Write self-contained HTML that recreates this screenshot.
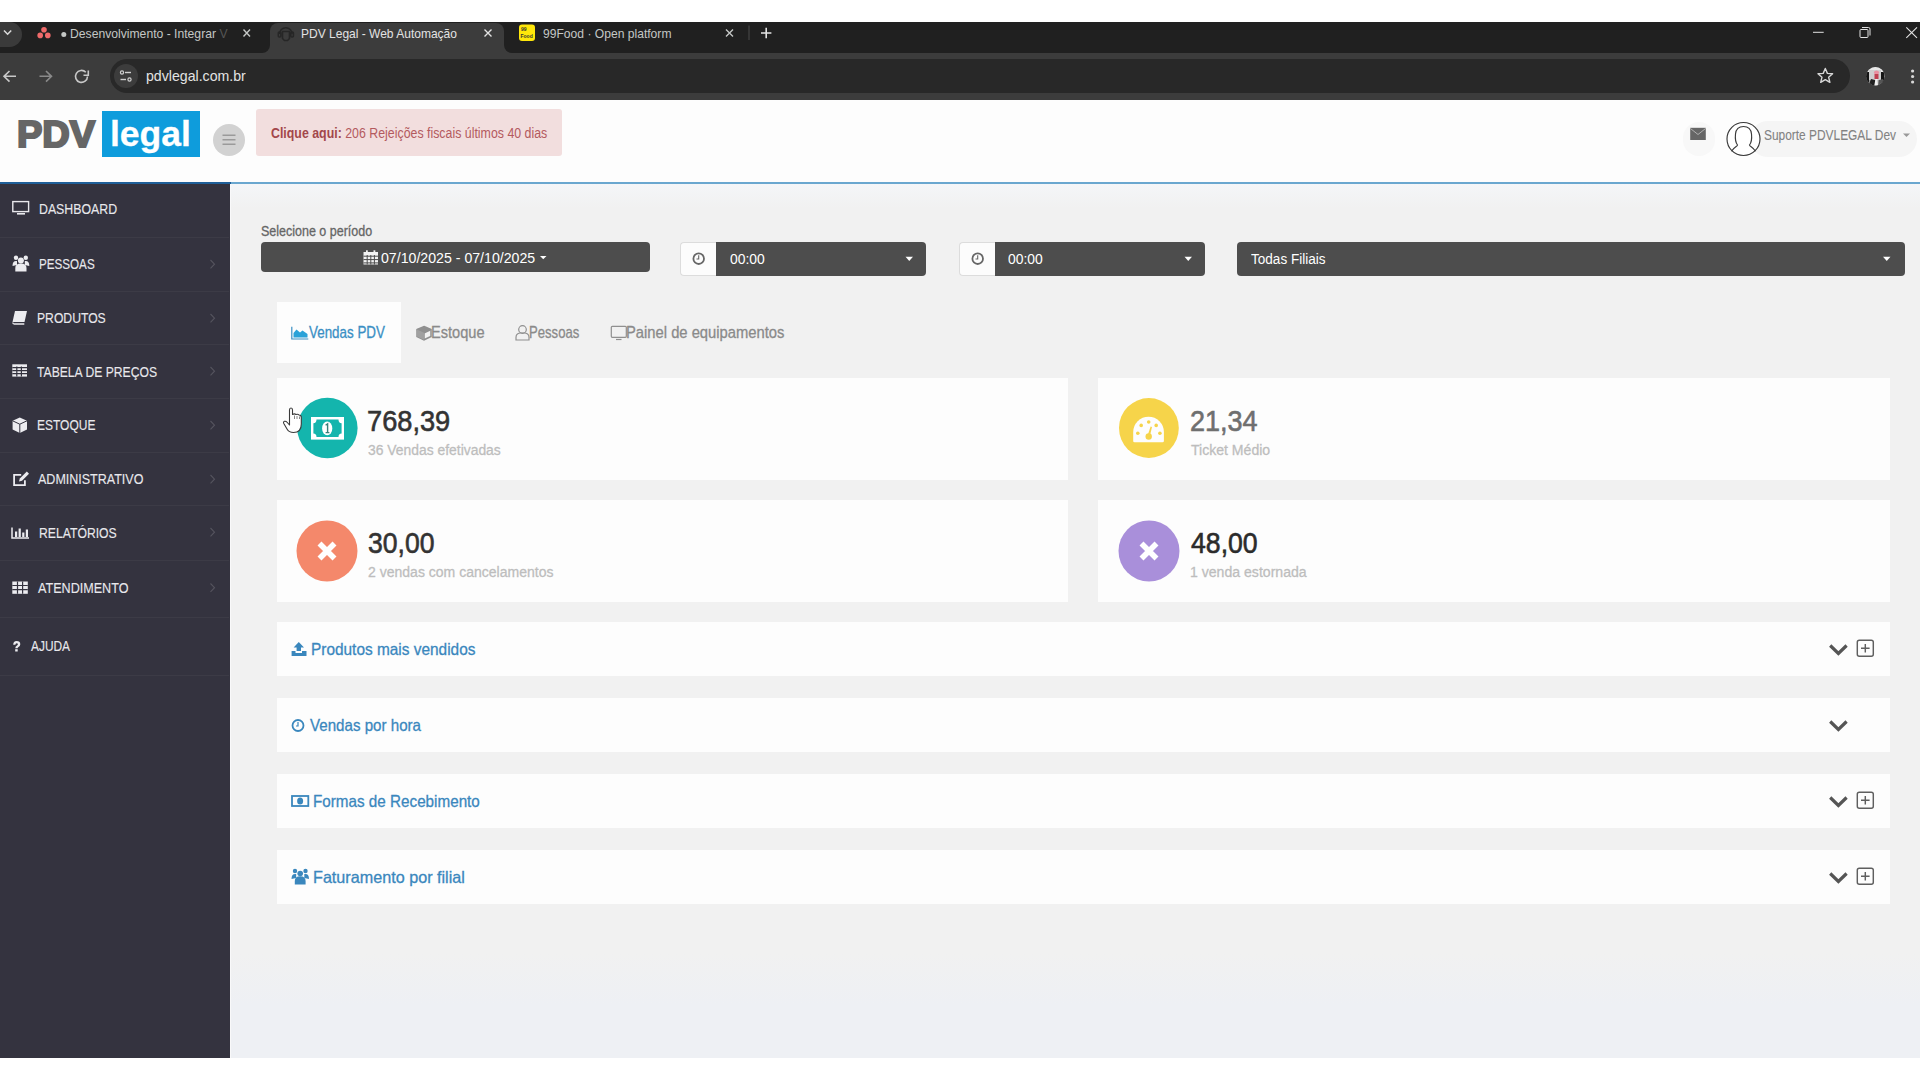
<!DOCTYPE html>
<html><head><meta charset="utf-8"><title>PDV Legal</title>
<style>
html,body{margin:0;padding:0;width:1920px;height:1080px;overflow:hidden;background:#fff;font-family:"Liberation Sans",sans-serif;}
.a{position:absolute;}
.t{position:absolute;white-space:nowrap;line-height:1;transform-origin:0 0;font-family:"Liberation Sans",sans-serif;}
svg{position:absolute;overflow:visible;}
</style></head><body>
<!-- ============ BROWSER CHROME ============ -->
<div class="a" style="left:0;top:22px;width:1920px;height:31px;background:#202020"></div>
<div class="a" style="left:0;top:22px;width:22px;height:25px;background:#3a3a3a;border-radius:0 13px 13px 0"></div>
<svg style="left:0;top:0" width="30" height="60"><path d="M4 30.5 L7.6 34.2 L11.2 30.5" fill="none" stroke="#d8d8d8" stroke-width="1.6"/></svg>
<!-- active tab -->
<div class="a" style="left:262px;top:45px;width:250px;height:8px;background:#3c3c3c"></div>
<div class="a" style="left:254px;top:37px;width:16px;height:16px;background:#202020;border-radius:0 0 8px 0"></div>
<div class="a" style="left:504px;top:37px;width:16px;height:16px;background:#202020;border-radius:0 0 0 8px"></div>
<div class="a" style="left:270px;top:23px;width:234px;height:30px;background:#3c3c3c;border-radius:8px 8px 0 0"></div>
<!-- toolbar -->
<div class="a" style="left:0;top:53px;width:1920px;height:47px;background:#3c3c3c"></div>
<div class="a" style="left:110px;top:59px;width:1740px;height:34px;background:#282828;border-radius:17px"></div>
<div class="a" style="left:114px;top:64px;width:24px;height:24px;background:#3c3c3c;border-radius:12px"></div>
<!-- tab icons -->
<svg style="left:0;top:0" width="800" height="60">
  <!-- asana -->
  <circle cx="44" cy="29.8" r="2.8" fill="#f06a6a"/>
  <circle cx="40.2" cy="35.4" r="2.8" fill="#f06a6a"/>
  <circle cx="47.8" cy="35.4" r="2.8" fill="#f06a6a"/>
  <circle cx="63.8" cy="34.5" r="2.5" fill="#c4c7c5"/>
  <!-- close x tab1 -->
  <path d="M243.5 29.5 L250 36.5 M250 29.5 L243.5 36.5" stroke="#c4c7c5" stroke-width="1.4"/>
  <!-- tab2 icon headset person -->
  <g fill="none" stroke="#262626" stroke-width="1.6">
    <path d="M279.5 34 a6.3 6.3 0 0 1 12.6 0"/>
    <rect x="278.3" y="32" width="2.6" height="5" rx="1"/>
    <rect x="290.8" y="32" width="2.6" height="5" rx="1"/>
    <path d="M282.5 31.5 h7 v7 l-2 2 h-3 l-2 -2 z"/>
  </g>
  <path d="M484.5 29.5 L491.5 36.5 M491.5 29.5 L484.5 36.5" stroke="#e3e3e3" stroke-width="1.4"/>
  <!-- 99food -->
  <rect x="519" y="24.5" width="16" height="16.5" rx="3" fill="#ffe70a"/>
  <text x="521" y="31" font-family="Liberation Sans" font-size="5" font-weight="700" fill="#333">99</text>
  <text x="520.5" y="37.5" font-family="Liberation Sans" font-size="5" font-weight="700" fill="#333">Food</text>
  <path d="M726 29.5 L733 36.5 M733 29.5 L726 36.5" stroke="#c4c7c5" stroke-width="1.4"/>
  <path d="M749 25.5 V40" stroke="#4a4a4a" stroke-width="1"/>
  <path d="M766.2 27.8 V38.2 M761 33 H771.4" stroke="#e3e3e3" stroke-width="1.6"/>
</svg>
<!-- window controls -->
<svg style="left:1780px;top:0" width="140" height="60">
  <path d="M33 32.3 H43.7" stroke="#e3e3e3" stroke-width="1"/>
  <rect x="80" y="29.5" width="8" height="8" rx="1" fill="none" stroke="#e3e3e3" stroke-width="1"/>
  <path d="M82 27.5 h6.5 a1.5 1.5 0 0 1 1.5 1.5 v6.5" fill="none" stroke="#e3e3e3" stroke-width="1"/>
  <path d="M126.3 27.4 L137 37.8 M137 27.4 L126.3 37.8" stroke="#e3e3e3" stroke-width="1.1"/>
</svg>
<!-- nav icons -->
<svg style="left:0;top:0" width="300" height="100">
  <path d="M16 76.3 H4.5 M9.5 71 L4 76.3 L9.5 81.6" fill="none" stroke="#c8c8c8" stroke-width="1.6"/>
  <path d="M39.5 76.3 H51 M46 71 L51.5 76.3 L46 81.6" fill="none" stroke="#8a8a8a" stroke-width="1.6"/>
  <path d="M87.5 76.5 A6 6 0 1 1 85.8 72.2" fill="none" stroke="#c8c8c8" stroke-width="1.6"/>
  <path d="M83.5 71.2 H88.3 V66.4" fill="none" stroke="#c8c8c8" stroke-width="1.6" transform="translate(0,4)"/>
  <!-- site info -->
  <circle cx="122" cy="72.5" r="1.6" fill="none" stroke="#d0d0d0" stroke-width="1.2"/>
  <path d="M125 72.5 H131" stroke="#d0d0d0" stroke-width="1.4"/>
  <path d="M120.5 79.5 H126" stroke="#d0d0d0" stroke-width="1.4"/>
  <circle cx="129.5" cy="79.5" r="1.6" fill="none" stroke="#d0d0d0" stroke-width="1.2"/>
</svg>
<svg style="left:1780px;top:50px" width="140" height="50">
  <path d="M45.3 18.5 L47.4 23.4 L52.6 23.8 L48.6 27.2 L49.9 32.3 L45.3 29.6 L40.7 32.3 L42 27.2 L38 23.8 L43.2 23.4 Z" fill="none" stroke="#d8d8d8" stroke-width="1.4" stroke-linejoin="round"/>
  <clipPath id="avc"><circle cx="95.4" cy="26.3" r="9.2"/></clipPath>
  <g clip-path="url(#avc)">
    <rect x="85" y="16" width="21" height="21" fill="#9a9a9a"/>
    <rect x="87" y="16" width="17" height="8" fill="#e8e8e8"/>
    <rect x="86" y="22" width="3" height="10" fill="#151515"/>
    <rect x="101" y="22" width="3" height="10" fill="#151515"/>
    <rect x="89" y="20" width="12" height="10" fill="#cfcfcf"/>
    <ellipse cx="96.5" cy="22.5" rx="2.6" ry="2" fill="#e890a0"/>
    <rect x="94.5" y="24" width="4" height="5" fill="#c04050"/>
    <path d="M88 37 l3 -8 l4 1 l1 7 z" fill="#202020"/>
    <path d="M94 37 l1.5 -8 l2 0 l0.5 8 z" fill="#f0f0f0"/>
    <path d="M98 37 l1 -7 l4 -1 l3 8 z" fill="#555"/>
  </g>
  <circle cx="132.6" cy="21" r="1.6" fill="#d8d8d8"/>
  <circle cx="132.6" cy="26.5" r="1.6" fill="#d8d8d8"/>
  <circle cx="132.6" cy="32" r="1.6" fill="#d8d8d8"/>
</svg>

<!-- ============ PAGE HEADER ============ -->
<div class="a" style="left:0;top:100px;width:1920px;height:82px;background:#fdfdfd"></div>
<div class="a" style="left:102px;top:111px;width:98px;height:46px;background:#0e9cdc"></div>
<div class="a" style="left:213px;top:124px;width:32px;height:32px;background:#d2d2d2;border-radius:16px"></div>
<svg style="left:0;top:0" width="260" height="180">
  <path d="M222.5 135.3 H235.5 M222.5 139.8 H235.5 M222.5 144.3 H235.5" stroke="#9a9a9a" stroke-width="1.6"/>
</svg>
<div class="a" style="left:256px;top:109px;width:306px;height:47px;background:#f2dede;border-radius:3px"></div>
<!-- right header -->
<div class="a" style="left:1683px;top:122px;width:32px;height:34px;background:#f8f8f8;border-radius:16px"></div>
<div class="a" style="left:1750px;top:121px;width:167px;height:36px;background:#f5f5f5;border-radius:18px"></div>
<svg style="left:1680px;top:110px" width="240" height="60">
  <path d="M10.2 17.8 H25.8 V30 H10.2 Z" fill="#666"/>
  <path d="M10.2 18.3 L18 24.5 L25.8 18.3" fill="none" stroke="#b0b0b0" stroke-width="1"/>
  <circle cx="63.5" cy="29" r="16.5" fill="#fff" stroke="#3a3a3a" stroke-width="1.15"/>
  <path d="M51.5 41.2 C54 37 57.5 36.5 57.5 35 C55.5 32.5 55 29 55.5 24 C56 19 59 16.5 63.5 16.5 C68 16.5 71 19 71.5 24 C72 29 71.5 32.5 69.5 35 C69.5 36.5 73 37 75.5 41.2" fill="none" stroke="#3a3a3a" stroke-width="1.15"/>
  <path d="M223 23.5 h7 l-3.5 3.5 z" fill="#999"/>
</svg>
<!-- blue line -->
<div class="a" style="left:0;top:182px;width:1920px;height:2px;background:#6aa7cf"></div>
<div class="a" style="left:0;top:182px;width:231px;height:2px;background:#1f5f98"></div>
<div class="a" style="left:230px;top:184px;width:1px;height:874px;background:#f9f9fa"></div>

<!-- ============ SIDEBAR ============ -->
<div class="a" style="left:0;top:184px;width:230px;height:874px;background:#34333f"></div>
<div class="a" style="left:0;top:237px;width:229px;height:1px;background:#3c3b46"></div>
<div class="a" style="left:0;top:291px;width:229px;height:1px;background:#3c3b46"></div>
<div class="a" style="left:0;top:344px;width:229px;height:1px;background:#3c3b46"></div>
<div class="a" style="left:0;top:398px;width:229px;height:1px;background:#3c3b46"></div>
<div class="a" style="left:0;top:452px;width:229px;height:1px;background:#3c3b46"></div>
<div class="a" style="left:0;top:505px;width:229px;height:1px;background:#3c3b46"></div>
<div class="a" style="left:0;top:560px;width:229px;height:1px;background:#3c3b46"></div>
<div class="a" style="left:0;top:617px;width:229px;height:1px;background:#3c3b46"></div>
<div class="a" style="left:0;top:675px;width:229px;height:1px;background:#3c3b46"></div>
<svg style="left:0;top:0" width="231" height="700">
  <g fill="none" stroke="#55545e" stroke-width="1.1">
    <path d="M210.5 260 L214.5 264.2 L210.5 268.4"/>
    <path d="M210.5 314 L214.5 318.2 L210.5 322.4"/>
    <path d="M210.5 367 L214.5 371.2 L210.5 375.4"/>
    <path d="M210.5 421 L214.5 425.2 L210.5 429.4"/>
    <path d="M210.5 475 L214.5 479.2 L210.5 483.4"/>
    <path d="M210.5 528 L214.5 532.2 L210.5 536.4"/>
    <path d="M210.5 583.5 L214.5 587.7 L210.5 591.9"/>
  </g>
  <!-- dashboard monitor -->
  <rect x="12.8" y="201.6" width="15.8" height="10" fill="none" stroke="#e8e8ec" stroke-width="1.4"/>
  <rect x="17" y="213" width="8" height="1.6" fill="#e8e8ec"/>
  <!-- pessoas group -->
  <g fill="#ececf0">
    <circle cx="16" cy="257.8" r="2.2"/><circle cx="25.8" cy="257.8" r="2.2"/>
    <circle cx="20.9" cy="260.5" r="3"/>
    <path d="M12.5 266 q0 -5 3.5 -5 h1 v4 z"/><path d="M29.3 266 q0 -5 -3.5 -5 h-1 v4 z"/>
    <path d="M15.3 271.5 v-3.5 q0 -4.5 5.6 -4.5 q5.6 0 5.6 4.5 v3.5 z"/>
  </g>
  <!-- produtos book -->
  <path d="M15 311 h12 l-2.5 11 h-12 z" fill="#ececf0"/>
  <path d="M12.8 322.5 q0 1.5 1.5 1.5 h10" fill="none" stroke="#ececf0" stroke-width="1.3"/>
  <!-- tabela grid -->
  <g fill="#ececf0">
    <rect x="12.3" y="364.3" width="14.7" height="12.3"/>
  </g>
  <g stroke="#34333f" stroke-width="1.2">
    <path d="M12.3 367.6 H27 M12.3 370.6 H27 M12.3 373.6 H27 M16.8 366.5 V376.6 M21.4 366.5 V376.6"/>
  </g>
  <!-- estoque cube -->
  <path d="M19.8 417.5 L27 420.8 V429.5 L19.8 433 L12.6 429.5 V420.8 Z" fill="#ececf0"/>
  <path d="M12.6 420.8 L19.8 424.2 L27 420.8 M19.8 424.2 V433" fill="none" stroke="#34333f" stroke-width="1"/>
  <!-- administrativo edit -->
  <path d="M13.2 474 h8 v1.8 h-6.2 v8.5 h9 v-4 h1.8 v5.8 h-12.6 z" fill="#ececf0"/>
  <path d="M19 481.5 l0.8 -3 l7 -7 l2.2 2.2 l-7 7 z" fill="#ececf0"/>
  <!-- relatorios chart -->
  <path d="M12 527.5 V538 H29" fill="none" stroke="#ececf0" stroke-width="1.5"/>
  <rect x="15" y="531.5" width="2.2" height="5.5" fill="#ececf0"/>
  <rect x="18.6" y="528.5" width="2.2" height="8.5" fill="#ececf0"/>
  <rect x="22.2" y="532.5" width="2.2" height="4.5" fill="#ececf0"/>
  <rect x="25.8" y="529.5" width="2.2" height="7.5" fill="#ececf0"/>
  <!-- atendimento grid -->
  <rect x="12.3" y="581.5" width="15.5" height="12.3" fill="#ececf0"/>
  <path d="M12.3 585.5 H27.8 M12.3 589.6 H27.8 M17.5 581.5 V593.8 M22.6 581.5 V593.8" stroke="#34333f" stroke-width="1.2"/>
  <!-- ajuda ? -->
  <path d="M13.2 644.8 Q13.2 641 16.6 641 Q20.3 641 20.3 644.3 Q20.3 646.3 18.2 647.3 Q17.6 647.7 17.6 648.3 H15.3 Q15.3 646.5 16.7 645.8 Q17.9 645.1 17.9 644.3 Q17.9 643.2 16.6 643.2 Q15.4 643.2 15.4 644.8 Z" fill="#ececf0"/><rect x="15.2" y="649.2" width="2.5" height="2.3" fill="#ececf0"/>
</svg>

<!-- ============ CONTENT ============ -->
<div class="a" style="left:231px;top:184px;width:1689px;height:874px;background:linear-gradient(#f4f6f8 0px,#f1f1f1 24px,#f1f1f1 770px,#eef0f4 820px,#eef0f4 874px)"></div>
<!-- date button -->
<div class="a" style="left:261px;top:242px;width:389px;height:30px;background:#4d4d4d;border-radius:4px"></div>
<div class="a" style="left:680px;top:242px;width:35px;height:32px;background:#fcfcfc;border:1px solid #dcdcdc;border-right:0;border-radius:4px 0 0 4px"></div>
<div class="a" style="left:716px;top:242px;width:210px;height:34px;background:#4d4d4d;border-radius:0 4px 4px 0"></div>
<div class="a" style="left:959px;top:242px;width:35px;height:32px;background:#fcfcfc;border:1px solid #dcdcdc;border-right:0;border-radius:4px 0 0 4px"></div>
<div class="a" style="left:995px;top:242px;width:210px;height:34px;background:#4d4d4d;border-radius:0 4px 4px 0"></div>
<div class="a" style="left:1237px;top:242px;width:668px;height:34px;background:#4d4d4d;border-radius:4px"></div>

<svg style="left:0;top:0" width="1920" height="300">
  <!-- calendar -->
  <rect x="363.5" y="252" width="14.5" height="12.5" fill="#f2f2f2"/>
  <rect x="366" y="250.3" width="1.8" height="3" fill="#f2f2f2"/><rect x="373.5" y="250.3" width="1.8" height="3" fill="#f2f2f2"/>
  <path d="M363.5 256.2 H378 M363.5 259.6 H378 M363.5 262.9 H378 M367.2 255 V264.5 M370.8 255 V264.5 M374.4 255 V264.5" stroke="#4d4d4d" stroke-width="1"/>
  <path d="M540 256 h6.5 l-3.25 3.3 z" fill="#fff"/>
  <!-- time addons -->
  <circle cx="698.7" cy="258.7" r="5.3" fill="none" stroke="#666" stroke-width="1.8"/>
  <path d="M698.7 255.3 V259 H696.5" fill="none" stroke="#666" stroke-width="1.1"/>
  <circle cx="977.7" cy="258.7" r="5.3" fill="none" stroke="#666" stroke-width="1.8"/>
  <path d="M977.7 255.3 V259 H975.5" fill="none" stroke="#666" stroke-width="1.1"/>
  <path d="M905.5 256.7 h7.5 l-3.75 4.3 z" fill="#fff"/>
  <path d="M1184.5 256.7 h7.5 l-3.75 4.3 z" fill="#fff"/>
  <path d="M1883 256.7 h7.5 l-3.75 4.3 z" fill="#fff"/>
</svg>
<!-- tabs -->
<div class="a" style="left:277px;top:302px;width:124px;height:61px;background:#fdfdfd"></div>

<!-- cards -->
<div class="a" style="left:277px;top:378px;width:791px;height:102px;background:#fdfdfd"></div>
<div class="a" style="left:1098px;top:378px;width:792px;height:102px;background:#fdfdfd"></div>
<div class="a" style="left:277px;top:500px;width:791px;height:102px;background:#fdfdfd"></div>
<div class="a" style="left:1098px;top:500px;width:792px;height:102px;background:#fdfdfd"></div>
<!-- panels -->
<div class="a" style="left:277px;top:622px;width:1613px;height:54px;background:#fdfdfd"></div>
<div class="a" style="left:277px;top:698px;width:1613px;height:54px;background:#fdfdfd"></div>
<div class="a" style="left:277px;top:774px;width:1613px;height:54px;background:#fdfdfd"></div>
<div class="a" style="left:277px;top:850px;width:1613px;height:54px;background:#fdfdfd"></div>

<svg style="left:0;top:0" width="1920" height="1000">
  <!-- tab icons -->
  <g>
    <path d="M291.8 326.8 V339 H308.3" fill="none" stroke="#3a8fc4" stroke-width="1.2"/>
    <path d="M293.5 337.5 V333 L296.5 329.5 L300 332.5 L302.5 330.5 L307.5 334 V337.5 Z" fill="#2aa2d8"/>
  </g>
  <g fill="none" stroke="#909090" stroke-width="1.5">
    <path d="M424 326.5 L431 329.5 V336.5 L424 339.8 L417 336.5 V329.5 Z"/>
    <path d="M417 329.5 L424 332.8 L431 329.5 M424 332.8 V339.8"/>
  </g>
  <path d="M424 326.5 L431 329.5 L424 332.8 L417 329.5 Z" fill="#909090"/>
  <path d="M417 329.5 L424 332.8 V339.8 L417 336.5 Z" fill="#a0a0a0"/>
  <g fill="none" stroke="#909090" stroke-width="1.2">
    <circle cx="522.5" cy="329.5" r="3.8"/>
    <path d="M516 340 v-2.5 q0 -4 4 -4.5 h5 q4 0.5 4 4.5 v2.5 z"/>
    <rect x="611.3" y="326.3" width="15" height="11" rx="1"/>
    <path d="M616 339.5 h5.5"/>
  </g>
  <!-- card circles -->
  <circle cx="327.4" cy="428" r="30.2" fill="#14b5ad"/>
  <rect x="311" y="417" width="33" height="22.6" fill="#fff"/>
  <path d="M316.5 419.6 H338.5 Q338.5 423.2 341.6 423.2 V433.4 Q338.5 433.4 338.5 437 H316.5 Q316.5 433.4 313.4 433.4 V423.2 Q316.5 423.2 316.5 419.6 Z" fill="#14b5ad"/>
  <ellipse cx="327.2" cy="428.4" rx="5.1" ry="6.9" fill="#fff"/>
  <path d="M325.6 425.2 L327.6 423.8 V432.6 M325.6 432.6 H329.4" fill="none" stroke="#3a7f7a" stroke-width="1.4"/>
  <circle cx="1148.9" cy="428" r="29.9" fill="#f6d44a"/>
  <path d="M1133.2 432 A15.35 15.35 0 0 1 1163.9 432 V441 Q1163.9 442.3 1162.6 442.3 H1134.5 Q1133.2 442.3 1133.2 441 Z" fill="#fdfdfd"/>
  <g fill="#f6d44a">
    <circle cx="1137.8" cy="433.2" r="1.8"/><circle cx="1141.2" cy="425.4" r="1.8"/><circle cx="1148.7" cy="422" r="1.8"/>
    <circle cx="1156.2" cy="425.4" r="1.8"/><circle cx="1159.9" cy="433.2" r="1.8"/>
    <circle cx="1148.7" cy="436.5" r="3.2"/>
    <path d="M1147.6 435.5 L1150.6 426.6 L1152 427 L1149.8 436.2 Z"/>
  </g>
  <circle cx="327" cy="551" r="30.5" fill="#f4886b"/>
  <path d="M319.5 543.5 L334.5 558.5 M334.5 543.5 L319.5 558.5" stroke="#fff" stroke-width="5.6"/>
  <circle cx="1149" cy="551" r="30.5" fill="#a98fda"/>
  <path d="M1141.5 543.5 L1156.5 558.5 M1156.5 543.5 L1141.5 558.5" stroke="#fff" stroke-width="5.6"/>

  <!-- panel icons -->
  <g fill="#3a87bd">
    <path d="M298.8 642 L304 647.5 H301 V651 H296.6 V647.5 H293.6 Z"/>
    <path d="M291.6 651 H295.5 V653 H302 V651 H306.5 V656 H291.6 Z"/>
  </g>
  <circle cx="298" cy="725.5" r="5.5" fill="none" stroke="#3a87bd" stroke-width="1.8"/>
  <path d="M298 722 V726 H296" fill="none" stroke="#3a87bd" stroke-width="1.2"/>
  <rect x="292" y="796" width="16.3" height="10" fill="none" stroke="#3a87bd" stroke-width="1.8"/>
  <ellipse cx="300.1" cy="801" rx="3" ry="3.6" fill="#3a87bd"/>
  <g fill="#3a87bd">
    <circle cx="295" cy="871" r="2.2"/><circle cx="305.5" cy="871" r="2.2"/><circle cx="300.2" cy="873.5" r="2.8"/>
    <path d="M291.5 879 q0 -5 3.5 -5 h1.2 v4 z"/><path d="M309 879 q0 -5 -3.5 -5 h-1.2 v4 z"/>
    <path d="M294.8 884.5 v-3.5 q0 -4.8 5.4 -4.8 q5.4 0 5.4 4.8 v3.5 z"/>
  </g>
  <!-- chevrons & plus -->
  <g fill="none" stroke="#555" stroke-width="3.2">
    <path d="M1830.2 645.5 L1838.4 653.5 L1846.6 645.5"/>
    <path d="M1830.2 721.5 L1838.4 729.5 L1846.6 721.5"/>
    <path d="M1830.2 797.5 L1838.4 805.5 L1846.6 797.5"/>
    <path d="M1830.2 873.5 L1838.4 881.5 L1846.6 873.5"/>
  </g>
  <g fill="none" stroke="#5f5f5f" stroke-width="1.45">
    <rect x="1857.3" y="640.3" width="16" height="16" rx="2"/>
    <path d="M1861 648.3 H1869.6 M1865.3 644 V652.6"/>
    <rect x="1857.3" y="792.3" width="16" height="16" rx="2"/>
    <path d="M1861 800.3 H1869.6 M1865.3 796 V804.6"/>
    <rect x="1857.3" y="868.3" width="16" height="16" rx="2"/>
    <path d="M1861 876.3 H1869.6 M1865.3 872 V880.6"/>
  </g>
  <!-- cursor hand -->
  <path d="M289.5 410 Q289.5 408 291 408 Q292.5 408 292.5 410 V414.5 Q294.5 413.2 296 414.5 Q298 413.8 299 415 Q301.3 415 301.3 417.5 V424 Q301.3 432.5 293.5 432.5 Q289 432.5 287 429 L283.8 423.5 Q283 421.8 284.5 421.3 Q286 421 287.3 422.5 L289.5 425 Z" fill="#fff" stroke="#3a3a3a" stroke-width="1.1" stroke-linejoin="round"/>
  <path d="M294.5 415.5 V419 M297 416 V419 M299.5 416.5 V419" stroke="#555" stroke-width="0.7"/>
  </svg>
<div class=t id='t0' style='left:70.00px;top:28.00px;font-size:12.79px;color:#c4c7c5;font-weight:400;transform:scaleX(0.9515);'>Desenvolvimento - Integrar <span style="color:#555">V</span></div>
<div class=t id='t1' style='left:301.00px;top:28.00px;font-size:12.79px;color:#e3e3e3;font-weight:400;transform:scaleX(0.9394);'>PDV Legal - Web Automação</div>
<div class=t id='t2' style='left:543.00px;top:28.00px;font-size:12.79px;color:#c4c7c5;font-weight:400;transform:scaleX(0.9467);'>99Food · Open platform</div>
<div class=t id='t3' style='left:146.00px;top:68.01px;font-size:15.15px;color:#e3e3e3;font-weight:400;transform:scaleX(0.9340);'>pdvlegal.com.br</div>
<div class=t id='t4' style='left:16.50px;top:116.00px;font-size:37.50px;color:#666666;font-weight:700;transform:scaleX(1.0130);-webkit-text-stroke:2.2px #666666;'>PDV</div>
<div class=t id='t5' style='left:109.50px;top:116.01px;font-size:35.98px;color:#ffffff;font-weight:700;transform:scaleX(0.9872);-webkit-text-stroke:0.3px #ffffff;'>legal</div>
<div class=t id='t6' style='left:271.00px;top:125.50px;font-size:14.53px;color:#b45a5e;font-weight:400;transform:scaleX(0.8519);'><b style="color:#a3474b">Clique aqui:</b> 206 Rejeições fiscais últimos 40 dias</div>
<div class=t id='t7' style='left:1764.00px;top:127.71px;font-size:14.10px;color:#828282;font-weight:400;transform:scaleX(0.8452);-webkit-text-stroke:0.1px #828282;'>Suporte PDVLEGAL Dev</div>
<div class=t id='t8' style='left:39.31px;top:200.60px;font-size:15.26px;color:#e8e8ec;font-weight:400;transform:scaleX(0.8083);-webkit-text-stroke:0.12px #e8e8ec;'>DASHBOARD</div>
<div class=t id='t9' style='left:38.81px;top:256.20px;font-size:15.26px;color:#e8e8ec;font-weight:400;transform:scaleX(0.7634);-webkit-text-stroke:0.12px #e8e8ec;'>PESSOAS</div>
<div class=t id='t10' style='left:36.60px;top:310.31px;font-size:15.26px;color:#e8e8ec;font-weight:400;transform:scaleX(0.7977);-webkit-text-stroke:0.12px #e8e8ec;'>PRODUTOS</div>
<div class=t id='t11' style='left:36.90px;top:363.51px;font-size:15.26px;color:#e8e8ec;font-weight:400;transform:scaleX(0.7973);-webkit-text-stroke:0.12px #e8e8ec;'>TABELA DE PREÇOS</div>
<div class=t id='t12' style='left:37.21px;top:417.31px;font-size:15.26px;color:#e8e8ec;font-weight:400;transform:scaleX(0.7863);-webkit-text-stroke:0.12px #e8e8ec;'>ESTOQUE</div>
<div class=t id='t13' style='left:38.40px;top:471.01px;font-size:15.26px;color:#e8e8ec;font-weight:400;transform:scaleX(0.8202);-webkit-text-stroke:0.12px #e8e8ec;'>ADMINISTRATIVO</div>
<div class=t id='t14' style='left:39.21px;top:524.91px;font-size:15.26px;color:#e8e8ec;font-weight:400;transform:scaleX(0.8000);-webkit-text-stroke:0.12px #e8e8ec;'>RELATÓRIOS</div>
<div class=t id='t15' style='left:38.40px;top:580.01px;font-size:15.26px;color:#e8e8ec;font-weight:400;transform:scaleX(0.8255);-webkit-text-stroke:0.12px #e8e8ec;'>ATENDIMENTO</div>
<div class=t id='t16' style='left:31.00px;top:638.01px;font-size:15.26px;color:#e8e8ec;font-weight:400;transform:scaleX(0.7800);-webkit-text-stroke:0.12px #e8e8ec;'>AJUDA</div>
<div class=t id='t17' style='left:261.25px;top:224.81px;font-size:13.81px;color:#666666;font-weight:400;transform:scaleX(0.9059);-webkit-text-stroke:0.3px #666666;'>Selecione o período</div>
<div class=t id='t18' style='left:380.81px;top:250.50px;font-size:14.53px;color:#ffffff;font-weight:400;transform:scaleX(0.9747);'>07/10/2025 - 07/10/2025</div>
<div class=t id='t19' style='left:729.71px;top:251.41px;font-size:15.26px;color:#ffffff;font-weight:400;transform:scaleX(0.9106);'>00:00</div>
<div class=t id='t20' style='left:1008.00px;top:251.41px;font-size:15.26px;color:#ffffff;font-weight:400;transform:scaleX(0.9106);'>00:00</div>
<div class=t id='t21' style='left:1250.71px;top:251.82px;font-size:14.83px;color:#ffffff;font-weight:400;transform:scaleX(0.9136);'>Todas Filiais</div>
<div class=t id='t22' style='left:309.21px;top:325.31px;font-size:15.99px;color:#3a8fc4;font-weight:400;transform:scaleX(0.8374);-webkit-text-stroke:0.3px #3a8fc4;'>Vendas PDV</div>
<div class=t id='t23' style='left:430.60px;top:325.31px;font-size:15.99px;color:#8a8a8a;font-weight:400;transform:scaleX(0.9141);-webkit-text-stroke:0.3px #8a8a8a;'>Estoque</div>
<div class=t id='t24' style='left:528.60px;top:325.31px;font-size:15.99px;color:#8a8a8a;font-weight:400;transform:scaleX(0.8200);-webkit-text-stroke:0.3px #8a8a8a;'>Pessoas</div>
<div class=t id='t25' style='left:626.00px;top:325.31px;font-size:15.99px;color:#8a8a8a;font-weight:400;transform:scaleX(0.9235);-webkit-text-stroke:0.3px #8a8a8a;'>Painel de equipamentos</div>
<div class=t id='t26' style='left:367.40px;top:406.60px;font-size:29.07px;color:#333333;font-weight:400;transform:scaleX(0.9364);-webkit-text-stroke:0.6px #333333;'>768,39</div>
<div class=t id='t27' style='left:368.40px;top:443.00px;font-size:14.53px;color:#bdbdbd;font-weight:400;transform:scaleX(0.9566);-webkit-text-stroke:0.3px #bdbdbd;'>36 Vendas efetivadas</div>
<div class=t id='t28' style='left:1189.81px;top:406.60px;font-size:29.07px;color:#6f6f6f;font-weight:400;transform:scaleX(0.9296);-webkit-text-stroke:0.6px #6f6f6f;'>21,34</div>
<div class=t id='t29' style='left:1190.81px;top:443.00px;font-size:14.53px;color:#bdbdbd;font-weight:400;transform:scaleX(0.9684);-webkit-text-stroke:0.3px #bdbdbd;'>Ticket Médio</div>
<div class=t id='t30' style='left:368.40px;top:528.91px;font-size:29.07px;color:#333333;font-weight:400;transform:scaleX(0.9140);-webkit-text-stroke:0.6px #333333;'>30,00</div>
<div class=t id='t31' style='left:368.40px;top:565.21px;font-size:14.53px;color:#bdbdbd;font-weight:400;transform:scaleX(0.9656);-webkit-text-stroke:0.3px #bdbdbd;'>2 vendas com cancelamentos</div>
<div class=t id='t32' style='left:1190.81px;top:528.91px;font-size:29.07px;color:#2b2b2b;font-weight:400;transform:scaleX(0.9167);-webkit-text-stroke:0.6px #2b2b2b;'>48,00</div>
<div class=t id='t33' style='left:1189.81px;top:565.21px;font-size:14.53px;color:#bdbdbd;font-weight:400;transform:scaleX(0.9704);-webkit-text-stroke:0.3px #bdbdbd;'>1 venda estornada</div>
<div class=t id='t34' style='left:310.60px;top:642.01px;font-size:16.72px;color:#3a87bd;font-weight:400;transform:scaleX(0.9225);-webkit-text-stroke:0.3px #3a87bd;'>Produtos mais vendidos</div>
<div class=t id='t35' style='left:309.81px;top:718.01px;font-size:16.72px;color:#3a87bd;font-weight:400;transform:scaleX(0.9057);-webkit-text-stroke:0.3px #3a87bd;'>Vendas por hora</div>
<div class=t id='t36' style='left:312.50px;top:794.01px;font-size:16.72px;color:#3a87bd;font-weight:400;transform:scaleX(0.9121);-webkit-text-stroke:0.3px #3a87bd;'>Formas de Recebimento</div>
<div class=t id='t37' style='left:312.50px;top:870.01px;font-size:16.72px;color:#3a87bd;font-weight:400;transform:scaleX(0.9680);-webkit-text-stroke:0.3px #3a87bd;'>Faturamento por filial</div>
</body></html>
